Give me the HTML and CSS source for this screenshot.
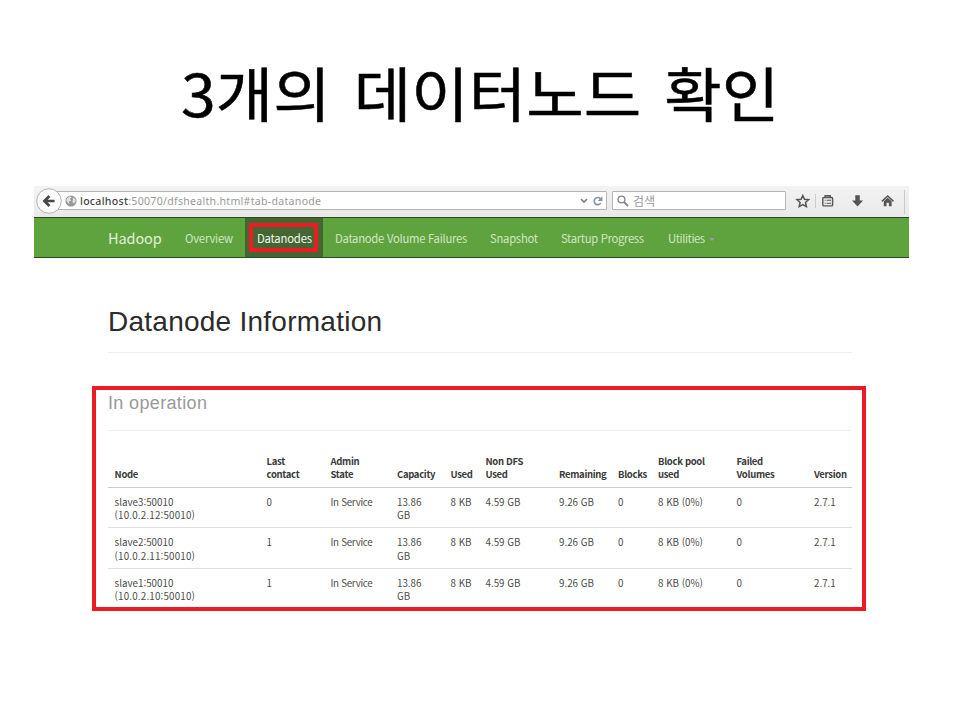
FILE: index.html
```html
<!DOCTYPE html>
<html lang="ko">
<head>
<meta charset="utf-8">
<title>3개의 데이터노드 확인</title>
<link rel="stylesheet" href="styles.css">
</head>
<body>
<h1 class="title">3개의 데이터노드 확인</h1>
<main class="browser">
  <div class="toolbar">
    <div class="back"><svg width="26" height="26" viewBox="0 0 26 26"><circle cx="13" cy="13" r="12.3" fill="#fbfbfb" stroke="#b4b4b4" stroke-width="1"/><path d="M13.4 8 8.4 13l5 5M9 13H18.6" fill="none" stroke="#484848" stroke-width="2.7"/></svg></div>
    <div class="address">
      <svg class="globe" width="12" height="12" viewBox="0 0 12 12"><circle cx="6" cy="6" r="5.6" fill="#999"/><path d="M2 3.5 4.5 1.3 6.5 2 5 4 6.3 5.5 4 6.5 4.5 9 3 8 1.2 5.5ZM8 2.5l2 1.3.7 2.2L9 8.5 7.5 7l.3-2Z" fill="#e2e2e2"/></svg>
      <span class="url"><b>localhost</b>:50070/dfshealth.html#tab-datanode</span>
      <svg class="addr-icons" width="24" height="12" viewBox="0 0 24 12"><path d="M1 4 4 7 7 4" fill="none" stroke="#808080" stroke-width="1.7"/><path d="M20.8 8.1A3.6 3.6 0 1 1 20.3 3.5" fill="none" stroke="#8593a3" stroke-width="1.7"/><path d="M22.4 1.2V6H17.7Z" fill="#8593a3"/></svg>
    </div>
    <div class="search">
      <svg width="12" height="12" viewBox="0 0 12 12"><circle cx="4.5" cy="4.5" r="3.4" fill="none" stroke="#888" stroke-width="1.4"/><path d="m7 7 4 4" stroke="#888" stroke-width="1.9"/></svg>
      <span>검색</span>
    </div>
    <svg class="tools" width="106" height="20" viewBox="0 0 106 20">
      <path d="m9.8 4.5 1.7 3.8 4.1.4-3.1 2.8.9 4.1-3.6-2.1-3.6 2.1.9-4.1L4 8.7l4.1-.4Z" fill="none" stroke="#555" stroke-width="1.5"/>
      <path d="M22.5 3v14" stroke="#ccc"/>
      <path d="M32.2 6.5V4.8h5v1.7" fill="none" stroke="#555" stroke-width="1.5"/>
      <rect x="29.8" y="6.5" width="9.8" height="8.4" rx="1" fill="#eee" stroke="#555" stroke-width="1.4"/>
      <path d="M31.6 9.3h1m1 0h4.5M31.6 12.2h1m1 0h4.5" stroke="#555" stroke-width="1.1"/>
      <path d="M62.3 4.2h4.5v5.3h3.3L64.5 15.4 59 9.5h3.3Z" fill="#555"/>
      <path d="m88.9 10.4 5.8-5.4 5.8 5.4" fill="none" stroke="#555" stroke-width="1.5"/>
      <path d="M90.8 10.3 94.7 6.7l3.9 3.6v5h-2.7v-3.5h-2.4v3.5h-2.7Z" fill="#555"/>
    </svg>
    <div class="edge"></div>
  </div>
  <nav class="nav">
    <span class="brand">Hadoop</span>
    <span class="item overview">Overview</span>
    <span class="item active"><span class="mark">Datanodes</span></span>
    <span class="item failures">Datanode Volume Failures</span>
    <span class="item snapshot">Snapshot</span>
    <span class="item startup">Startup Progress</span>
    <span class="item utilities">Utilities <i class="caret"></i></span>
  </nav>
  <h2 class="heading">Datanode Information</h2>
  <section class="panel">
    <h3 class="sub">In operation</h3>
    <table>
      <colgroup><col class="c1"><col class="c2"><col class="c3"><col class="c4"><col class="c5"><col class="c6"><col class="c7"><col class="c8"><col class="c9"><col class="c10"><col class="c11"></colgroup>
      <thead><tr><th>Node</th><th>Last<br>contact</th><th>Admin<br>State</th><th>Capacity</th><th>Used</th><th>Non DFS<br>Used</th><th>Remaining</th><th>Blocks</th><th>Block pool<br>used</th><th>Failed<br>Volumes</th><th>Version</th></tr></thead>
      <tbody>
        <tr><td>slave3:50010<br><span class="addr">(10.0.2.12:50010)</span></td><td>0</td><td class="state">In Service</td><td>13.86<br>GB</td><td>8 KB</td><td>4.59 GB</td><td>9.26 GB</td><td>0</td><td>8 KB (0%)</td><td>0</td><td>2.7.1</td></tr>
        <tr><td>slave2:50010<br><span class="addr">(10.0.2.11:50010)</span></td><td>1</td><td class="state">In Service</td><td>13.86<br>GB</td><td>8 KB</td><td>4.59 GB</td><td>9.26 GB</td><td>0</td><td>8 KB (0%)</td><td>0</td><td>2.7.1</td></tr>
        <tr><td>slave1:50010<br><span class="addr">(10.0.2.10:50010)</span></td><td>1</td><td class="state">In Service</td><td>13.86<br>GB</td><td>8 KB</td><td>4.59 GB</td><td>9.26 GB</td><td>0</td><td>8 KB (0%)</td><td>0</td><td>2.7.1</td></tr>
      </tbody>
    </table>
  </section>
</main>
</body>
</html>
```
FILE: styles.css
```css
* { box-sizing: border-box; }
body { margin: 0; width: 960px; height: 720px; overflow: hidden; background: #fff; font-family: "Noto Sans CJK KR", sans-serif; }
svg { display: block; flex: none; }
.title { margin: 0 0 0 181px; width: 620px; height: 186px; padding-top: 49px; line-height: 86px; font-size: 58.67px; font-weight: 400; word-spacing: 5.3px; transform: scaleX(1.065); transform-origin: left; color: #000; white-space: nowrap; -webkit-text-stroke: .5px #000; }
.browser { width: 875px; margin-left: 34px; }
.toolbar { height: 31px; display: flex; align-items: center; padding-left: 2px; background: linear-gradient(#f3f3f3, #e9e9e9); position: relative; }
.back { width: 26px; margin: -2px 0 0; position: relative; z-index: 1; }
.address { width: 553px; height: 19px; margin: -2px 0 0 -8px; padding: 0 2px 0 10px; display: flex; align-items: center; background: #fff; border: 1px solid #b5b5b5; border-radius: 1px; }
.url { margin-left: 3px; font: 10.6px/17px "Noto Sans", sans-serif; color: #999; letter-spacing: .27px; white-space: nowrap; padding-top: 1px; }
.url b { font-weight: 500; color: #444; }
.addr-icons { margin-left: auto; }
.search { width: 174px; height: 19px; margin: -2px 0 0 5px; padding-left: 4px; display: flex; align-items: center; gap: 4px; background: #fff; border: 1px solid #b5b5b5; border-radius: 1px; font-size: 12px; line-height: 17px; color: #999; }
.tools { margin: -2px 0 0 7px; }
.edge { width: 1px; height: 24px; margin-left: 5px; background: #c5cbd2; }
.nav { height: 41px; border-top: 1px solid #2a4a1c; border-bottom: 1px solid #284b1a; background: #5fa33e; display: flex; align-items: stretch; padding-left: 74px; line-height: 40px; color: #cfe6c4; font-size: 11.3px; letter-spacing: -.28px; white-space: nowrap; }
.brand { width: 65px; font-size: 14.5px; letter-spacing: -.1px; color: #e0f0d8; }
.item { padding-left: 12px; }
.overview { width: 72px; letter-spacing: -.2px; }
.active { width: 78px; padding: 5px 0 0 4px; background: #446633; color: #f4f8f2; }
.mark { display: block; width: 69px; height: 29px; border: 4px solid #ed1c24; line-height: 22px; padding-left: 4px; letter-spacing: -.2px; }
.failures { width: 155px; }
.snapshot { width: 71px; }
.startup { width: 107px; letter-spacing: -.34px; }
.utilities { letter-spacing: -.45px; }
.caret { display: inline-block; border: 3px solid transparent; border-top-color: #a29ba0; border-bottom: 0; vertical-align: 2px; margin-left: 2px; }
.heading { margin: 41px 57px 0 74px; height: 54px; border-bottom: 1px solid #eee; font: 400 28px/45px "Liberation Sans", sans-serif; letter-spacing: .25px; color: #2b2b2b; white-space: nowrap; }
.panel { width: 774px; height: 225px; margin: 33px 0 0 58px; border: 4px solid #ed1c24; padding: 0 11px 0 12px; }
.sub { margin: 0 0 9px; height: 41px; border-bottom: 1px solid #eee; font: 400 18px/26px "Liberation Sans", sans-serif; letter-spacing: .35px; color: #999; }
table { width: 744px; table-layout: fixed; border-collapse: separate; border-spacing: 0; font-size: 9.8px; line-height: 13.4px; color: #4c4c4c; white-space: nowrap; }
.c1 { width: 152.5px; } .c2 { width: 64px; } .c3 { width: 66.5px; } .c4 { width: 53.5px; } .c5 { width: 35px; } .c6 { width: 73.5px; } .c7 { width: 59px; } .c8 { width: 40px; } .c9 { width: 78.5px; } .c10 { width: 77.5px; } .c11 { width: 44px; }
th, td { padding: 0 0 0 6px; text-align: left; vertical-align: top; }
th:first-child, td:first-child { padding-left: 6.6px; }
th { height: 48px; vertical-align: bottom; padding-bottom: 5.5px; font-size: 9.5px; letter-spacing: -.32px; font-weight: 700; color: #3a3a3a; border-bottom: 1px solid #ccc; }
td { height: 40.4px; padding-top: 8px; }
.addr { letter-spacing: .18px; }
.state { letter-spacing: -.3px; }
tbody tr:not(:last-child) td { border-bottom: 1px solid #ddd; }
```
